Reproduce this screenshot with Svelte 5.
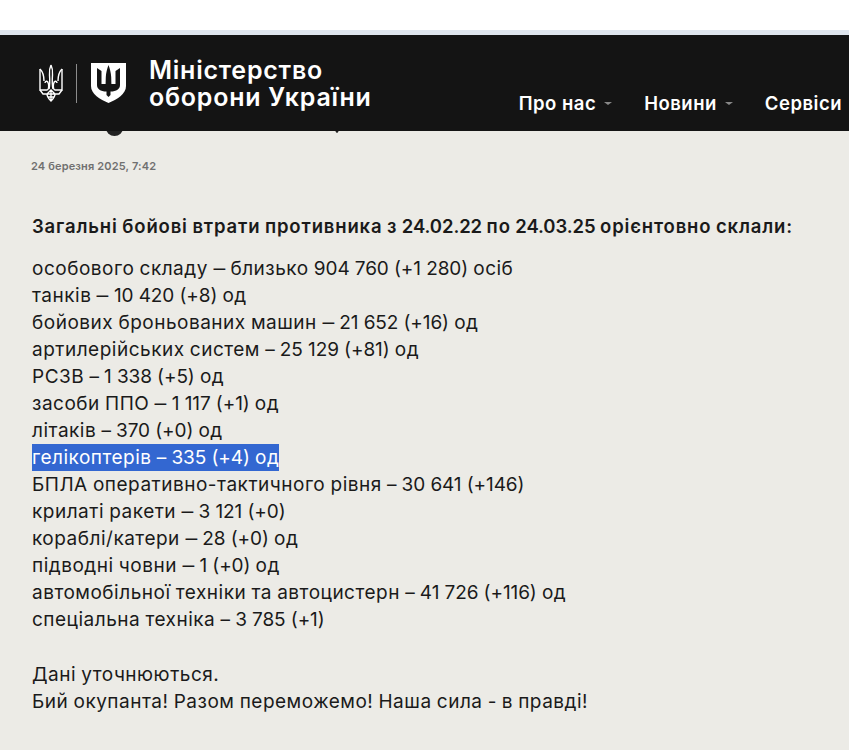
<script>
  const lines = [
    'особового складу — близько 904 760 (+1 280) осіб',
    'танків — 10 420 (+8) од',
    'бойових броньованих машин — 21 652 (+16) од',
    'артилерійських систем – 25 129 (+81) од',
    'РСЗВ – 1 338 (+5) од',
    'засоби ППО — 1 117 (+1) од',
    'літаків – 370 (+0) од',
    'гелікоптерів – 335 (+4) од',
    'БПЛА оперативно-тактичного рівня – 30 641 (+146)',
    'крилаті ракети — 3 121 (+0)',
    'кораблі/катери — 28 (+0) од',
    'підводні човни — 1 (+0) од',
    'автомобільної техніки та автоцистерн – 41 726 (+116) од',
    'спеціальна техніка – 3 785 (+1)'
  ];
  const outro = ['Дані уточнюються.', 'Бий окупанта! Разом переможемо! Наша сила - в правді!'];
  const lead = 'Загальні бойові втрати противника з 24.02.22 по 24.03.25 орієнтовно склали:';

  // The reference's typeface has wide Cyrillic, narrow digits and short dashes.
  function parts(text) {
    return text.split(/(—|[\u0400-\u04FF/!-]+)/).filter(Boolean).map((t) => ({
      t,
      k: t === '—' ? 'em' : /[\u0400-\u04FF]/.test(t) ? 'word' : 'num'
    }));
  }
</script>

{#snippet styled(text)}
  {#each parts(text) as p}<span class={p.k}>{p.t}</span>{/each}
{/snippet}

<div class="page">
  <div class="topbar"></div>
  <header class="header">
    <div class="brand">
      <svg viewBox="0 0 24 38" width="24" height="38" fill="none" stroke="#fff" stroke-width="1.4">
        <path d="M12 1c-1.500 3-1.800 6-1.500 10s.5 10-.5 14M12 1c1.500 3 1.800 6 1.500 10s-.5 10 .5 14" />
        <path d="M1 5v21h7c1.500 0 2-3 1.500-6-.5-3-3-4-3.500-1M23 5v21h-7c-1.500 0-2-3-1.500-6 .5-3 3-4 3.500-1" />
        <path d="M1 5c3 3 4 6.500 4 12M23 5c-3 3-4 6.500-4 12" />
        <path d="M1 26l3 4h16l3-4M8 30c0 3 2 5 4 7 2-2 4-4 4-7M8 30l4-4 4 4M12 26v11M8.500 33h7" />
      </svg>
      <span class="divider"></span>
      <svg viewBox="0 0 35 40" width="35" height="40">
        <path fill="#fff" d="M0 0h35v23c0 8-9 13.500-17.500 17C9 36.500 0 31 0 23z" />
        <path fill="#141414" d="M17.500 2C16 6 15 10 14.800 14L14.600 21H10.500V8L6 5V22C6 26 9.500 28.500 15.500 28.500V32L17.500 34 19.500 32V28.500C25.500 28.500 29 26 29 22V5L24.500 8V21H20.400L20.200 14C20 10 19 6 17.500 2Z" />
      </svg>
      <div class="title">Міністерство<br />оборони України</div>
    </div>
    <nav class="nav">
      <span class="item">Про нас<i class="caret"></i></span>
      <span class="item">Новини<i class="caret"></i></span>
      <span class="item">Сервіси</span>
    </nav>
  </header>
  <main class="content">
    <span class="blob blob-a"></span>
    <span class="blob blob-b"></span>
    <div class="date">24 березня 2025, 7:42</div>
    <p class="lead">{@render styled(lead)}</p>
    <div class="list">
      {#each lines as line, i}
        <div class="row"><span class:sel={i === 7}>{@render styled(line)}</span></div>
      {/each}
    </div>
    <div class="outro">
      {#each outro as line}
        <div class="row">{@render styled(line)}</div>
      {/each}
    </div>
  </main>
</div>

<style>
  :global(body) {
    margin: 0;
    background: #ecebe6;
  }
  .page {
    height: 750px;
    overflow: hidden;
    font-family: Inter, "Liberation Sans", sans-serif;
    color: #1a1a1a;
    background: #ecebe6;
  }
  .topbar {
    height: 30px;
    background: #fff;
    border-bottom: 5px solid #dfe6ee;
  }
  .header {
    position: relative;
    z-index: 1;
    height: 96px;
    background: #141414;
    color: #fff;
    display: flex;
    justify-content: space-between;
    padding-left: 39px;
    overflow: hidden;
    white-space: nowrap;
  }
  .brand {
    display: flex;
    align-items: center;
    height: 96px;
  }
  .divider {
    width: 1px;
    height: 39px;
    background: #8c8c8c;
    margin: 0 14px 0 13px;
  }
  .title {
    margin: 2px 0 0 23px;
    font-size: 25px;
    line-height: 27px;
    font-weight: 600;
    letter-spacing: 0.75px;
  }
  .nav {
    display: flex;
    align-items: flex-start;
    gap: 32px;
    padding-top: 57px;
    margin-right: 7px;
    font-size: 18.5px;
    line-height: 22px;
    font-weight: 600;
    letter-spacing: 0.5px;
  }
  .item {
    display: flex;
    align-items: center;
  }
  .caret {
    width: 0;
    height: 0;
    margin-left: 8px;
    border-left: 4px solid transparent;
    border-right: 4px solid transparent;
    border-top: 3px solid #888;
  }
  .content {
    position: relative;
    padding: 0 32px;
  }
  .blob {
    position: absolute;
    top: -10px;
    background: #222;
    border-radius: 50%;
  }
  .blob-a {
    left: 106px;
    width: 17px;
    height: 15px;
  }
  .blob-b {
    left: 335px;
    width: 4px;
    height: 12px;
  }
  .date {
    padding-top: 28px;
    margin-left: -1px;
    font-size: 11px;
    line-height: 14px;
    font-weight: 600;
    letter-spacing: 0.15px;
    color: #707070;
  }
  .lead {
    margin: 40px 0 0;
    font-size: 18.5px;
    line-height: 27px;
    font-weight: 600;
  }
  .lead .word {
    letter-spacing: 0.84px;
  }
  .list {
    margin-top: 15px;
  }
  .row {
    font-size: 19px;
    line-height: 27px;
    white-space: nowrap;
  }
  .word {
    letter-spacing: 0.5px;
  }
  .num {
    letter-spacing: -0.1px;
  }
  .em {
    display: inline-block;
    transform: scaleX(0.62);
    margin: 0 -3.5px;
  }
  .sel {
    display: inline-block;
    background: #3367d1;
    color: #fff;
  }
  .outro {
    margin-top: 28px;
  }
</style>
